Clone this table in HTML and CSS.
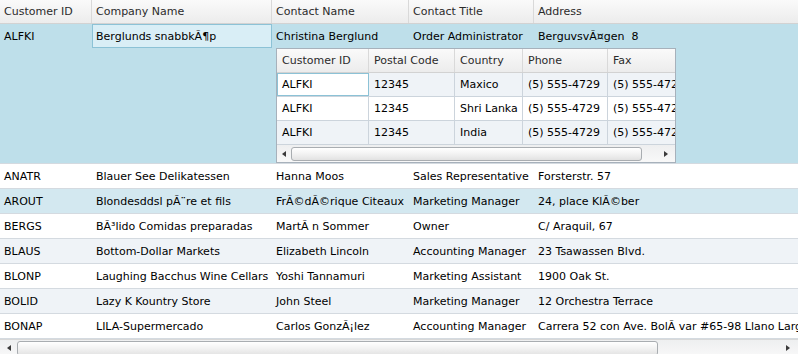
FILE: index.html
```html
<!DOCTYPE html>
<html>
<head>
<meta charset="utf-8">
<link rel="stylesheet" href="styles.css">
</head>
<body>
<div class="grid">
  <div class="hdr">
    <div class="hcell c1">Customer ID</div>
    <div class="hcell c2">Company Name</div>
    <div class="hcell c3">Contact Name</div>
    <div class="hcell c4">Contact Title</div>
    <div class="hcell c5">Address</div>
  </div>

  <div class="row selected">
    <div class="row-main">
      <div class="cell c1">ALFKI</div>
      <div class="cell c2 current">Berglunds snabbkÃ¶p</div>
      <div class="cell c3">Christina Berglund</div>
      <div class="cell c4">Order Administrator</div>
      <div class="cell c5">BerguvsvÃ¤gen  8</div>
    </div>
    <div class="details">
      <div class="sub">
        <div class="sub-hdr">
          <div class="shcell s1">Customer ID</div>
          <div class="shcell s2">Postal Code</div>
          <div class="shcell s3">Country</div>
          <div class="shcell s4">Phone</div>
          <div class="shcell s5">Fax</div>
        </div>
        <div class="sub-row alt">
          <div class="scell s1 scurrent">ALFKI</div>
          <div class="scell s2">12345</div>
          <div class="scell s3">Maxico</div>
          <div class="scell s4">(5) 555-4729</div>
          <div class="scell s5">(5) 555-4729</div>
        </div>
        <div class="sub-row">
          <div class="scell s1">ALFKI</div>
          <div class="scell s2">12345</div>
          <div class="scell s3">Shri Lanka</div>
          <div class="scell s4">(5) 555-4729</div>
          <div class="scell s5">(5) 555-4729</div>
        </div>
        <div class="sub-row alt">
          <div class="scell s1">ALFKI</div>
          <div class="scell s2">12345</div>
          <div class="scell s3">India</div>
          <div class="scell s4">(5) 555-4729</div>
          <div class="scell s5">(5) 555-4729</div>
        </div>
        <div class="hscroll sub-scroll">
          <div class="arrow sub-arrow-l"><span class="tri-l"></span></div>
          <div class="thumb sub-thumb"></div>
          <div class="arrow sub-arrow-r"><span class="tri-r"></span></div>
        </div>
      </div>
    </div>
  </div>

  <div class="row">
    <div class="row-main">
      <div class="cell c1">ANATR</div>
      <div class="cell c2">Blauer See Delikatessen</div>
      <div class="cell c3">Hanna Moos</div>
      <div class="cell c4">Sales Representative</div>
      <div class="cell c5">Forsterstr. 57</div>
    </div>
  </div>
  <div class="row hover">
    <div class="row-main">
      <div class="cell c1">AROUT</div>
      <div class="cell c2">Blondesddsl pÃ¨re et fils</div>
      <div class="cell c3">FrÃ©dÃ©rique Citeaux</div>
      <div class="cell c4">Marketing Manager</div>
      <div class="cell c5">24, place KlÃ©ber</div>
    </div>
  </div>
  <div class="row">
    <div class="row-main">
      <div class="cell c1">BERGS</div>
      <div class="cell c2">BÃ³lido Comidas preparadas</div>
      <div class="cell c3">MartÃ n Sommer</div>
      <div class="cell c4">Owner</div>
      <div class="cell c5">C/ Araquil, 67</div>
    </div>
  </div>
  <div class="row alt">
    <div class="row-main">
      <div class="cell c1">BLAUS</div>
      <div class="cell c2">Bottom-Dollar Markets</div>
      <div class="cell c3">Elizabeth Lincoln</div>
      <div class="cell c4">Accounting Manager</div>
      <div class="cell c5">23 Tsawassen Blvd.</div>
    </div>
  </div>
  <div class="row">
    <div class="row-main">
      <div class="cell c1">BLONP</div>
      <div class="cell c2">Laughing Bacchus Wine Cellars</div>
      <div class="cell c3">Yoshi Tannamuri</div>
      <div class="cell c4">Marketing Assistant</div>
      <div class="cell c5">1900 Oak St.</div>
    </div>
  </div>
  <div class="row alt">
    <div class="row-main">
      <div class="cell c1">BOLID</div>
      <div class="cell c2">Lazy K Kountry Store</div>
      <div class="cell c3">John Steel</div>
      <div class="cell c4">Marketing Manager</div>
      <div class="cell c5">12 Orchestra Terrace</div>
    </div>
  </div>
  <div class="row">
    <div class="row-main">
      <div class="cell c1">BONAP</div>
      <div class="cell c2">LILA-Supermercado</div>
      <div class="cell c3">Carlos GonzÃ¡lez</div>
      <div class="cell c4">Accounting Manager</div>
      <div class="cell c5">Carrera 52 con Ave. BolÃ var #65-98 Llano Largo</div>
    </div>
  </div>

  <div class="hscroll main-scroll">
    <div class="arrow main-arrow-l"><span class="tri-l"></span></div>
    <div class="thumb main-thumb"></div>
    <div class="arrow main-arrow-r"><span class="tri-r"></span></div>
  </div>
</div>
</body>
</html>
```
FILE: styles.css
```css
* { box-sizing: border-box; }

html, body {
  margin: 0;
  padding: 0;
}

body {
  width: 798px;
  height: 354px;
  overflow: hidden;
  background: #ffffff;
  color: #000000;
  font-family: "DejaVu Sans", Verdana, sans-serif;
  font-size: 11px;
}

.grid {
  display: flex;
  flex-direction: column;
  width: 798px;
  height: 354px;
  overflow: hidden;
}

/* column widths (main grid) */
.c1 { width: 92px; flex: none; }
.c2 { width: 180px; flex: none; }
.c3 { width: 137px; flex: none; }
.c4 { width: 125px; flex: none; }
.c5 { flex: 1; min-width: 0; }

/* header */
.hdr {
  display: flex;
  flex: none;
  height: 24px;
  background: linear-gradient(#fafafa, #ececec);
  border-bottom: 1px solid #d2d2d2;
  color: #2b2b2b;
}

.hcell {
  display: flex;
  align-items: center;
  padding-left: 4px;
  border-right: 1px solid #d9d9d9;
  white-space: nowrap;
  overflow: hidden;
}
.hcell.c5 { border-right: none; }

/* rows */
.row {
  flex: none;
  border-bottom: 1px solid #d4dae0;
  background: #ffffff;
}
.row.alt { background: #eff3f7; }
.row.hover { background: #d3e8f0; }
.row.selected { background: #bedfea; }

.row-main {
  display: flex;
  height: 24px;
}

.cell {
  display: flex;
  align-items: center;
  padding-left: 4px;
  white-space: pre;
  overflow: hidden;
}

.cell.current {
  background: #d9eef6;
  border: 1px solid #8cc2d6;
  padding-left: 3px;
}

/* details */
.details {
  padding-left: 276px;
}

.sub {
  width: 400px;
  height: 115px;
  border: 1px solid #a7b1bb;
  background: #ffffff;
  display: flex;
  flex-direction: column;
  overflow: hidden;
}

.s1 { width: 92px; flex: none; }
.s2 { width: 86px; flex: none; }
.s3 { width: 68px; flex: none; }
.s4 { width: 85px; flex: none; }
.s5 { flex: 1; min-width: 0; }

.sub-hdr {
  display: flex;
  flex: none;
  height: 24px;
  background: linear-gradient(#fafafa, #ececec);
  border-bottom: 1px solid #d2d2d2;
  color: #2b2b2b;
}

.shcell {
  display: flex;
  align-items: center;
  padding-left: 5px;
  border-right: 1px solid #d9d9d9;
  white-space: nowrap;
  overflow: hidden;
}
.shcell.s5 { border-right: none; }

.sub-row {
  display: flex;
  flex: none;
  height: 24px;
  background: #ffffff;
  border-bottom: 1px solid #ccd4dc;
}
.sub-row.alt { background: #eff3f7; }

.scell {
  display: flex;
  align-items: center;
  padding-left: 5px;
  border-right: 1px solid #ccd4dc;
  white-space: nowrap;
  overflow: hidden;
}
.scell.s5 { border-right: none; }

.scell.scurrent {
  background: #ffffff;
  border: 1px solid #8cc2d6;
  padding-left: 4px;
}

/* scrollbars */
.hscroll {
  display: flex;
  align-items: center;
  flex: none;
  height: 17px;
  background: linear-gradient(#eeeff0, #f8f8f8);
}

.main-scroll {
  border-top: 1px solid #d8d8d8;
}

.arrow {
  display: flex;
  align-items: center;
  justify-content: center;
  flex: none;
  height: 100%;
}

.tri-l {
  width: 0;
  height: 0;
  border-top: 3px solid transparent;
  border-bottom: 3px solid transparent;
  border-right: 4px solid #3a3a3a;
}

.tri-r {
  width: 0;
  height: 0;
  border-top: 3px solid transparent;
  border-bottom: 3px solid transparent;
  border-left: 4px solid #3a3a3a;
}

.thumb {
  flex: none;
  height: 15px;
  border: 1px solid #a9adb1;
  border-radius: 3px;
  background: linear-gradient(#ffffff, #f2f2f2 50%, #e2e2e2);
}

.main-arrow-l { width: 17px; }
.main-thumb { width: 641px; }
.main-arrow-r { flex: 1; justify-content: flex-end; padding-right: 8px; }

.sub-arrow-l { width: 14px; }
.sub-thumb { width: 351px; height: 14px; }
.sub-arrow-r { flex: 1; justify-content: flex-end; padding-right: 7px; }
```
